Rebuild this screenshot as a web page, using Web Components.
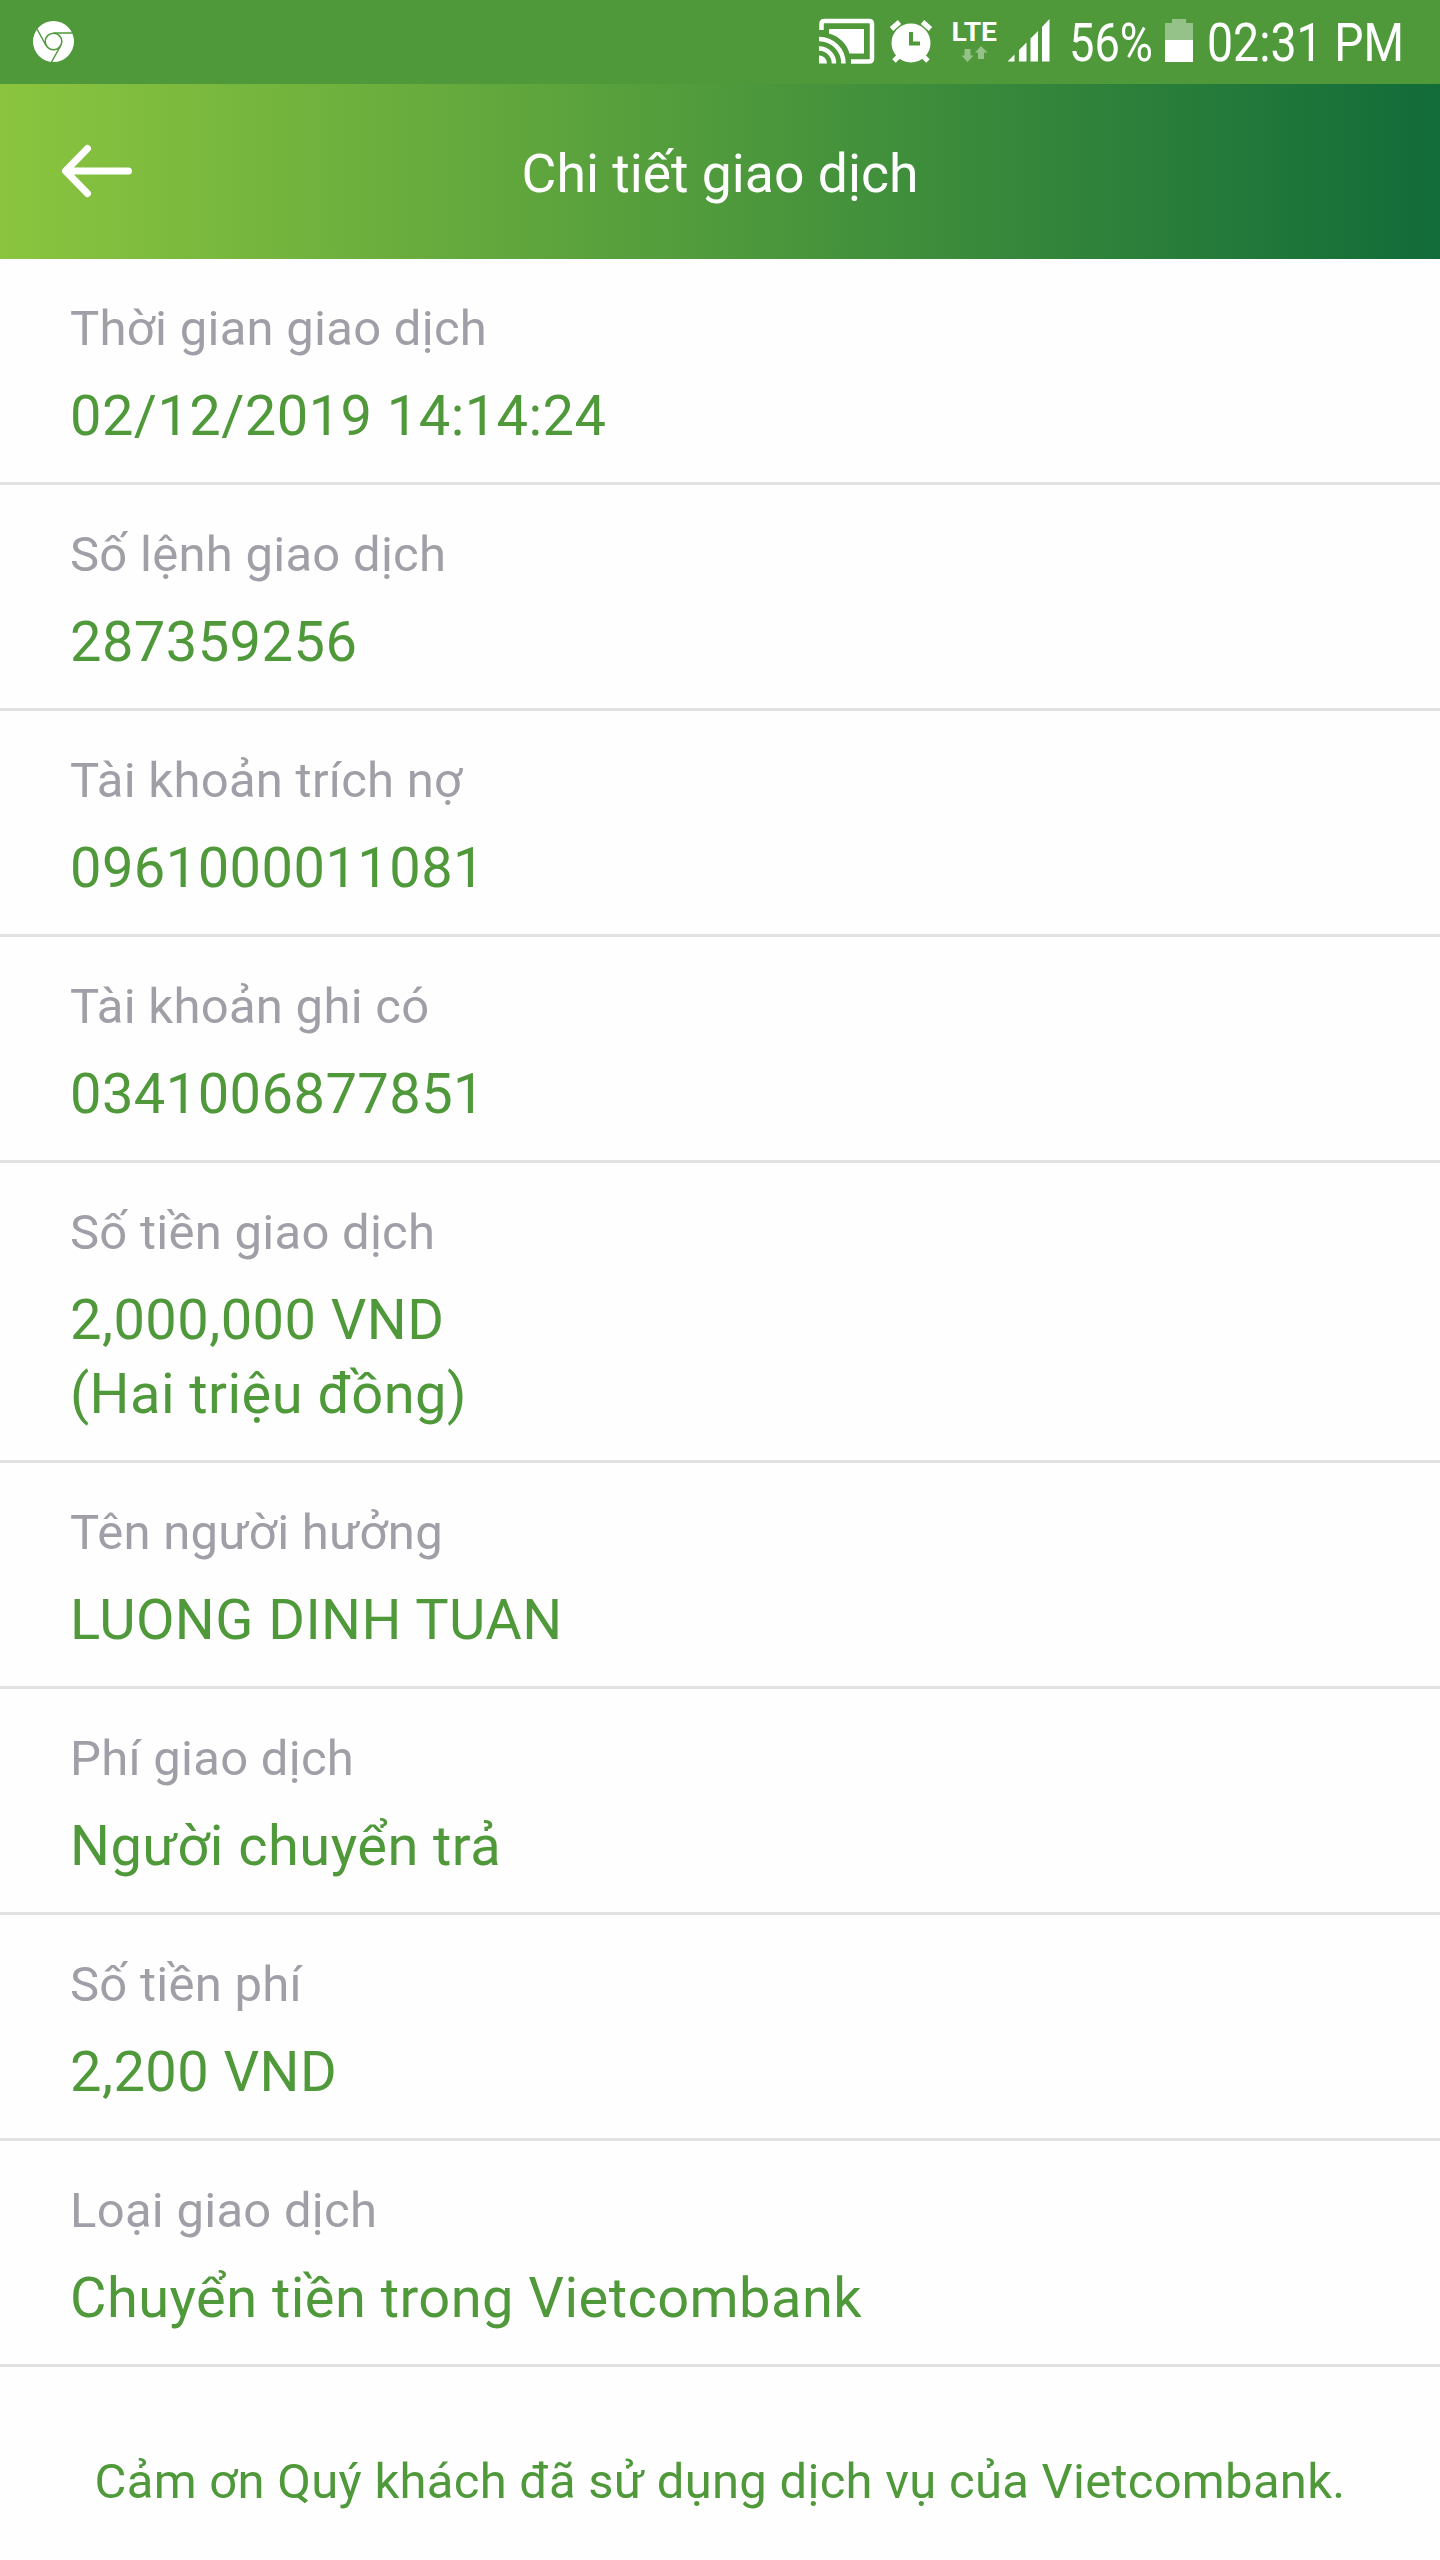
<!DOCTYPE html>
<html lang="vi">
<head>
<meta charset="UTF-8">
<title>Chi tiết giao dịch</title>
<style>
    body {
        margin: 0;
        background: #fefefe;
        font-family: Roboto, "Liberation Sans", sans-serif;
    }
</style>
</head>
<body>
<transaction-page></transaction-page>

<script>
class StatusBar extends HTMLElement {
    constructor() {
        super();
        this.attachShadow({ mode: "open" });

        this.shadowRoot.innerHTML = `
            <style>
                :host {
                    display: flex;
                    align-items: flex-start;
                    box-sizing: border-box;
                    height: 84px;
                    padding-left: 33px;
                    background: #4f993b;
                    color: #fff;
                }

                svg {
                    display: block;
                    flex: none;
                    overflow: visible;
                }

                text {
                    font-family: Roboto, "Liberation Sans", sans-serif;
                    fill: #fff;
                }

                .chrome {
                    margin-right: auto;
                }
            </style>

            <!-- browser notification -->
            <svg class="chrome" width="42" height="84" viewBox="33 0 42 84">
                <circle cx="53.5" cy="41.5" r="20.5" fill="#fff"/>
                <g fill="none" stroke="#4f993b" stroke-width="1.5">
                    <circle cx="53.5" cy="41.5" r="8.3"/>
                    <path d="M53.5 33H74M46 45.5L37 29M60.5 46L51 63"/>
                </g>
            </svg>

            <!-- cast, alarm, network and signal -->
            <svg width="240" height="84" viewBox="814 0 240 84">
                <path d="M821.5 30V24q0-3 3-3h44.500q3 0 3 3V58.500q0 3-3 3H851" fill="none" stroke="#fff" stroke-width="4.500"/>
                <path d="M829 29h35v24.500h-14.500A29 29 0 0 0 829 33.500z" fill="#fff"/>
                <path d="M819 55.500a8 8 0 0 1 8 8h-8z" fill="#fff"/>
                <path d="M819 48.500a15 15 0 0 1 15 15M819 39a24.500 24.500 0 0 1 24.500 24.500" fill="none" stroke="#fff" stroke-width="4.500"/>

                <circle cx="911" cy="43" r="19.500" fill="#fff"/>
                <path d="M891.500 29l8-7M922.500 22l8 7M899 56l-5 5M923 56l5 5" stroke="#fff" stroke-width="5"/>
                <path d="M911 32v11.500h9" fill="none" stroke="#4f993b" stroke-width="4"/>

                <text x="951.500" y="41" font-size="26" font-weight="700" textLength="45.500" lengthAdjust="spacingAndGlyphs">LTE</text>
                <path d="M964.500 49h6v6.500h3L967.500 62l-6-6.500h3zM978 59h6v-6.500h3.500L981 46l-6 6.500h3z" fill="#fff" opacity=".4"/>

                <path d="M1007.500 61.500h7v-7zM1019 61.500h7.500V42.500l-7.500 7.500zM1030.500 61.500h7.500V31l-7.500 7.500zM1042 61.500h7.500V19l-7.500 8z" fill="#fff"/>
            </svg>

            <svg width="107" height="84" viewBox="1054 0 107 84">
                <text x="1069" y="61" font-size="53" textLength="84" lengthAdjust="spacingAndGlyphs">56%</text>
            </svg>
            <svg width="36" height="84" viewBox="1161 0 36 84">
                <path d="M1165 40V23h7v-4h14v4h7v17z" fill="#fff" opacity=".4"/>
                <path d="M1165 40h28v22h-28z" fill="#fff"/>
            </svg>
            <svg width="243" height="84" viewBox="1197 0 243 84">
                <text x="1207" y="61" font-size="53" textLength="197" lengthAdjust="spacingAndGlyphs">02:31 PM</text>
            </svg>
        `;
    }
}

class TitleBar extends HTMLElement {
    constructor() {
        super();
        this.attachShadow({ mode: "open" });

        this.shadowRoot.innerHTML = `
            <style>
                :host {
                    display: grid;
                    grid-template-columns: 200px 1fr 200px;
                    align-items: center;
                    height: 175px;
                    background: linear-gradient(90deg, #8bc53f 0%, #4f9a3c 50%, #126c39 100%);
                    color: #fff;
                }

                h1 {
                    margin: 0;
                    padding-top: 4px;
                    font-size: 53.5px;
                    font-weight: 400;
                    line-height: 64px;
                    text-align: center;
                }

                svg {
                    display: block;
                    margin: 0 0 1px 58px;
                }
            </style>

            <svg width="78" height="58" viewBox="58 142 78 58" fill="none" stroke="#fff" stroke-width="7" stroke-linecap="round" stroke-linejoin="round">
                <path d="M87.500 148.500L65.500 171L87.500 193.500M66 171H128.500"/>
            </svg>
            <h1><slot></slot></h1>
        `;
    }
}

class DetailRow extends HTMLElement {
    constructor() {
        super();
        this.attachShadow({ mode: "open" });

        this.shadowRoot.innerHTML = `
            <style>
                :host {
                    display: flex;
                    flex-direction: column;
                    gap: 22px;
                    padding: 42px 70px 29px;
                    border-bottom: 3px solid #e1e1e1;
                }

                .label {
                    color: #a09fa7;
                    font-size: 49px;
                    line-height: 56px;
                    letter-spacing: 0.27px;
                }

                .value {
                    color: #4f993b;
                    font-size: 56px;
                    line-height: 74px;
                    letter-spacing: 0.45px;
                }
            </style>

            <div class="label"></div>
            <div class="value"><slot></slot></div>
        `;
    }

    connectedCallback() {
        this.shadowRoot.querySelector(".label").textContent = this.getAttribute("label");
    }
}

class ThankYouNote extends HTMLElement {
    constructor() {
        super();
        this.attachShadow({ mode: "open" });

        this.shadowRoot.innerHTML = `
            <style>
                :host {
                    display: block;
                    padding-top: 87px;
                    color: #4f993b;
                    font-size: 49px;
                    line-height: 56px;
                    letter-spacing: 0.27px;
                    text-align: center;
                    white-space: nowrap;
                }
            </style>

            <slot></slot>
        `;
    }
}

class TransactionPage extends HTMLElement {
    constructor() {
        super();
        this.attachShadow({ mode: "open" });

        this.shadowRoot.innerHTML = `
            <style>
                :host {
                    display: flex;
                    flex-direction: column;
                    box-sizing: border-box;
                    width: 1440px;
                    height: 2560px;
                    overflow: hidden;
                }
            </style>

            <status-bar></status-bar>
            <title-bar>Chi tiết giao dịch</title-bar>
            <detail-row label="Thời gian giao dịch">02/12/2019 14:14:24</detail-row>
            <detail-row label="Số lệnh giao dịch">287359256</detail-row>
            <detail-row label="Tài khoản trích nợ">0961000011081</detail-row>
            <detail-row label="Tài khoản ghi có">0341006877851</detail-row>
            <detail-row label="Số tiền giao dịch">2,000,000 VND<br>(Hai triệu đồng)</detail-row>
            <detail-row label="Tên người hưởng">LUONG DINH TUAN</detail-row>
            <detail-row label="Phí giao dịch">Người chuyển trả</detail-row>
            <detail-row label="Số tiền phí">2,200 VND</detail-row>
            <detail-row label="Loại giao dịch">Chuyển tiền trong Vietcombank</detail-row>
            <thank-you-note>Cảm ơn Quý khách đã sử dụng dịch vụ của Vietcombank.</thank-you-note>
        `;
    }
}

customElements.define("status-bar", StatusBar);
customElements.define("title-bar", TitleBar);
customElements.define("detail-row", DetailRow);
customElements.define("thank-you-note", ThankYouNote);
customElements.define("transaction-page", TransactionPage);
</script>
</body>
</html>
